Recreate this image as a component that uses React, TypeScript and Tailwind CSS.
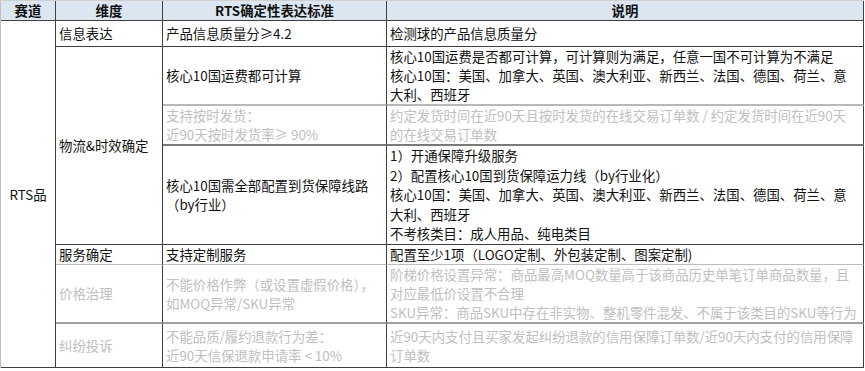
import React from "react";

const dark = "border-[#404040]";

function Lines({ lines }: { lines: string[] }) {
  return (
    <>
      {lines.map((l, i) => (
        <div key={i} className="whitespace-nowrap">
          {l}
        </div>
      ))}
    </>
  );
}

export default function App() {
  const cell = "px-[3px] py-0 align-middle text-left border-r border-b";
  return (
    <div
      className="w-[865px] h-[371px] bg-white text-[#111] text-[13.4px] leading-[19px] overflow-hidden"
      style={{ fontFamily: '"Noto Sans CJK SC", "Noto Sans", sans-serif' }}
    >
      <table className="table-fixed border-separate border-spacing-0 w-[863px] border-t border-l border-t-[#d0d0d0] border-l-[#c0c0c0]">
        <colgroup>
          <col className="w-[55px]" />
          <col className="w-[107px]" />
          <col className="w-[224px]" />
          <col className="w-[477px]" />
        </colgroup>
        <thead>
          <tr className="h-[20px] bg-[#dce6f1]">
            <th className={`border-r border-b ${dark} font-bold text-center`}>赛道</th>
            <th className={`border-r border-b ${dark} font-bold text-center`}>维度</th>
            <th className={`border-r border-b ${dark} font-bold text-center`}>RTS确定性表达标准</th>
            <th className={`border-r border-b ${dark} font-bold text-center`}>说明</th>
          </tr>
        </thead>
        <tbody>
          <tr className="h-[26px]">
            <td rowSpan={7} className={`border-r border-b ${dark} text-center align-middle`}>
              RTS品
            </td>
            <td className={`${cell} ${dark}`}>信息表达</td>
            <td className={`${cell} ${dark}`}>产品信息质量分≥4.2</td>
            <td className={`${cell} ${dark}`}>检测球的产品信息质量分</td>
          </tr>
          <tr className="h-[59px]">
            <td rowSpan={3} className={`${cell} ${dark}`}>
              物流&amp;时效确定
            </td>
            <td className={`${cell} border-r-[#404040] border-b-[#b8b8b8] border-b-2`}>核心10国运费都可计算</td>
            <td className={`${cell} border-r-[#404040] border-b-[#b8b8b8] border-b-2`}>
              <Lines
                lines={[
                  "核心10国运费是否都可计算，可计算则为满足，任意一国不可计算为不满足",
                  "核心10国：美国、加拿大、英国、澳大利亚、新西兰、法国、德国、荷兰、意",
                  "大利、西班牙",
                ]}
              />
            </td>
          </tr>
          <tr className="h-[38px] text-[#c0c0c0]">
            <td className={`${cell} border-r-[#404040] border-b-[#7a7a7a] border-b-2`}>
              <Lines lines={["支持按时发货：", "近90天按时发货率≥ 90%"]} />
            </td>
            <td className={`${cell} border-r-[#404040] border-b-[#7a7a7a] border-b-2`}>
              <Lines
                lines={[
                  "约定发货时间在近90天且按时发货的在线交易订单数 / 约定发货时间在近90天",
                  "的在线交易订单数",
                ]}
              />
            </td>
          </tr>
          <tr className="h-[99px]">
            <td className={`${cell} ${dark}`}>
              <Lines lines={["核心10国需全部配置到货保障线路", "（by行业）"]} />
            </td>
            <td className={`${cell} ${dark}`}>
              <div className="leading-[19.6px]">
                <Lines
                  lines={[
                    "1）开通保障升级服务",
                    "2）配置核心10国到货保障运力线（by行业化）",
                    "核心10国：美国、加拿大、英国、澳大利亚、新西兰、法国、德国、荷兰、意",
                    "大利、西班牙",
                    "不考核类目：成人用品、纯电类目",
                  ]}
                />
              </div>
            </td>
          </tr>
          <tr className="h-[20px]">
            <td className={`${cell} border-r-[#404040] border-b-[#bdbdbd]`}>服务确定</td>
            <td className={`${cell} border-r-[#404040] border-b-[#bdbdbd]`}>支持定制服务</td>
            <td className={`${cell} border-r-[#404040] border-b-[#bdbdbd]`}>
              配置至少1项（LOGO定制、外包装定制、图案定制)
            </td>
          </tr>
          <tr className="h-[59px] text-[#c0c0c0]">
            <td className={`${cell} border-r-[#404040] border-b-[#a0a0a0] border-b-2`}>价格治理</td>
            <td className={`${cell} border-r-[#404040] border-b-[#a0a0a0] border-b-2`}>
              <Lines lines={["不能价格作弊（或设置虚假价格），", "如MOQ异常/SKU异常"]} />
            </td>
            <td className={`${cell} border-r-[#404040] border-b-[#a0a0a0] border-b-2`}>
              <Lines
                lines={[
                  "阶梯价格设置异常：商品最高MOQ数量高于该商品历史单笔订单商品数量，且",
                  "对应最低价设置不合理",
                  "SKU异常：商品SKU中存在非实物、整机零件混发、不属于该类目的SKU等行为",
                ]}
              />
            </td>
          </tr>
          <tr className="h-[44px] text-[#c0c0c0]">
            <td className={`${cell} ${dark}`}>纠纷投诉</td>
            <td className={`${cell} ${dark}`}>
              <Lines lines={["不能品质/履约退款行为差：", "近90天信保退款申请率 < 10%"]} />
            </td>
            <td className={`${cell} ${dark}`}>
              <Lines
                lines={[
                  "近90天内支付且买家发起纠纷退款的信用保障订单数/近90天内支付的信用保障",
                  "订单数",
                ]}
              />
            </td>
          </tr>
        </tbody>
      </table>
    </div>
  );
}
